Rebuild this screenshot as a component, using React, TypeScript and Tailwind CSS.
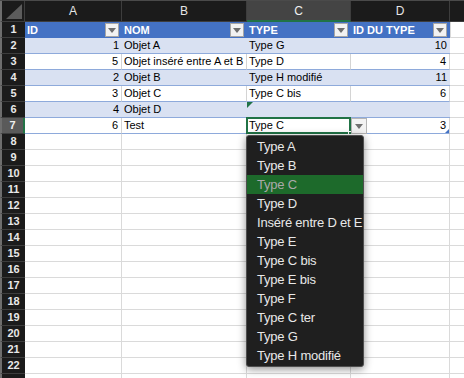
import React from "react";

const FilterBtn = () => (
  <div className="absolute right-[3px] top-[1px] w-[14px] h-[14px] bg-[#f2f2f2] border border-[#a6a6a6] flex items-center justify-center">
    <div className="w-0 h-0 border-l-[4px] border-r-[4px] border-t-[5px] border-l-transparent border-r-transparent border-t-[#6e6e6e]" />
  </div>
);

type Row = { n: number; a: string; b: string; c: string; d: string; band: boolean };

const rows: Row[] = [
  { n: 2, a: "1", b: "Objet A", c: "Type G", d: "10", band: true },
  { n: 3, a: "5", b: "Objet inséré entre A et B", c: "Type D", d: "4", band: false },
  { n: 4, a: "2", b: "Objet B", c: "Type H modifié", d: "11", band: true },
  { n: 5, a: "3", b: "Objet C", c: "Type C bis", d: "6", band: false },
  { n: 6, a: "4", b: "Objet D", c: "", d: "", band: true },
  { n: 7, a: "6", b: "Test", c: "Type C", d: "3", band: false },
];

const menuItems = [
  "Type A",
  "Type B",
  "Type C",
  "Type D",
  "Inséré entre D et E",
  "Type E",
  "Type C bis",
  "Type E bis",
  "Type F",
  "Type C ter",
  "Type G",
  "Type H modifié",
];

const RowHead = ({ n, sel }: { n: number | string; sel?: boolean }) =>
  sel ? (
    <div className="w-[25px] shrink-0 h-full bg-[#5a5a5a] border-l-2 border-l-[#6e6e6e] border-b border-b-[#3d3d3d] border-r-2 border-r-[#217346] text-[#f0f0f0] font-bold text-[11px] flex items-center justify-center">
      {n}
    </div>
  ) : (
    <div className="w-[25px] shrink-0 h-full bg-[#1b1b1b] border-l-2 border-l-[#6e6e6e] border-b border-b-[#3d3d3d] text-[#e8e8e8] font-bold text-[11px] flex items-center justify-center">
      {n}
    </div>
  );

export default function App() {
  const empty: number[] = [];
  for (let i = 8; i <= 23; i++) empty.push(i);

  return (
    <div
      className="relative w-[464px] h-[378px] overflow-hidden bg-white"
      style={{ fontFamily: '"Liberation Sans", Arial, sans-serif' }}
    >
      {/* column letters */}
      <div className="flex h-[22px] bg-[#1b1b1b] border-t border-t-[#4a4a4a]">
        <div className="w-[25px] shrink-0 h-full border-l-2 border-l-[#6e6e6e] border-r border-r-[#3d3d3d] border-b border-b-[#3d3d3d] flex items-end justify-end pr-[2px] pb-[2px]">
          <svg width="16" height="15" viewBox="0 0 16 15">
            <polygon points="16,0 16,15 0,15" fill="#5c5c5c" />
          </svg>
        </div>
        <div className="w-[97px] shrink-0 h-full border-r border-r-[#3d3d3d] border-b border-b-[#3d3d3d] text-[#e6e6e6] text-[12px] flex items-center justify-center">A</div>
        <div className="w-[125px] shrink-0 h-full border-r border-r-[#3d3d3d] border-b border-b-[#3d3d3d] text-[#e6e6e6] text-[12px] flex items-center justify-center">B</div>
        <div className="w-[104px] shrink-0 h-full bg-[#444444] border-r border-r-[#3d3d3d] border-b-2 border-b-[#217346] text-[#f0f0f0] text-[12px] flex items-center justify-center">C</div>
        <div className="w-[99px] shrink-0 h-full border-r border-r-[#3d3d3d] border-b border-b-[#3d3d3d] text-[#e6e6e6] text-[12px] flex items-center justify-center">D</div>
        <div className="flex-1 h-full border-b border-b-[#3d3d3d]" />
      </div>

      {/* table header row 1 */}
      <div className="flex h-[16px] text-[11px]">
        <RowHead n={1} />
        <div className="relative w-[97px] shrink-0 h-full bg-[#4472c4] text-white font-bold pl-[2px] flex items-center">
          ID
          <FilterBtn />
        </div>
        <div className="relative w-[125px] shrink-0 h-full bg-[#4472c4] text-white font-bold pl-[2px] flex items-center">
          NOM
          <FilterBtn />
        </div>
        <div className="relative w-[104px] shrink-0 h-full bg-[#4472c4] text-white font-bold pl-[2px] flex items-center">
          TYPE
          <FilterBtn />
        </div>
        <div className="relative w-[99px] shrink-0 h-full bg-[#4472c4] text-white font-bold pl-[2px] flex items-center">
          ID DU TYPE
          <FilterBtn />
        </div>
        <div className="flex-1 h-full border-b border-l border-[#d9d9d9]" />
      </div>

      {rows.map((r) => {
        const sel = r.n === 7;
        return (
          <div key={r.n} className="flex h-[16px] text-[11px] text-black">
            <RowHead n={r.n} sel={sel} />
            {r.band ? (
              <>
                <div className="w-[97px] shrink-0 h-full bg-[#d9e1f2] border-b border-b-[#8eaadb] pr-[3px] flex items-center justify-end">{r.a}</div>
                <div className="w-[125px] shrink-0 h-full bg-[#d9e1f2] border-b border-b-[#8eaadb] pl-[2px] flex items-center whitespace-nowrap overflow-hidden">{r.b}</div>
                <div className="relative w-[104px] shrink-0 h-full bg-[#d9e1f2] border-b border-b-[#8eaadb] pl-[2px] flex items-center whitespace-nowrap">
                  {r.c}
                  {r.n === 6 && (
                    <div className="absolute top-0 left-0 w-0 h-0 border-t-[6px] border-t-[#217346] border-r-[6px] border-r-transparent" />
                  )}
                </div>
                <div className="w-[99px] shrink-0 h-full bg-[#d9e1f2] border-b border-b-[#8eaadb] pr-[3px] flex items-center justify-end">{r.d}</div>
              </>
            ) : (
              <>
                <div className="w-[97px] shrink-0 h-full bg-white border-b border-b-[#8eaadb] border-r border-r-[#d4d4d4] pr-[3px] flex items-center justify-end">{r.a}</div>
                <div className="w-[125px] shrink-0 h-full bg-white border-b border-b-[#8eaadb] border-r border-r-[#d4d4d4] pl-[2px] flex items-center whitespace-nowrap overflow-hidden">{r.b}</div>
                <div className="relative w-[104px] shrink-0 h-full bg-white border-b border-b-[#8eaadb] border-r border-r-[#d4d4d4] pl-[2px] flex items-center whitespace-nowrap">
                  {r.c}
                  {sel && (
                    <>
                      <div className="absolute -top-[1px] -left-[1px] -right-[1px] -bottom-[1px] border-2 border-[#217346]" />
                      <div className="absolute -bottom-[2px] -right-[2px] w-[4px] h-[4px] bg-[#217346] border border-white" />
                      <div className="absolute top-0 left-[calc(100%+1px)] w-[16px] h-[16px] bg-[#f3f3f3] border border-[#b5b5b5] flex items-center justify-center z-10">
                        <div className="w-0 h-0 border-l-[4px] border-r-[4px] border-t-[5px] border-l-transparent border-r-transparent border-t-[#707070]" />
                      </div>
                    </>
                  )}
                </div>
                <div className="relative w-[99px] shrink-0 h-full bg-white border-b border-b-[#8eaadb] border-r border-r-[#d4d4d4] pr-[3px] flex items-center justify-end">
                  {r.d}
                  {sel && (
                    <div className="absolute bottom-0 right-0 w-0 h-0 border-b-[4px] border-b-[#4472c4] border-l-[4px] border-l-transparent" />
                  )}
                </div>
              </>
            )}
            <div className="flex-1 h-full bg-white border-b border-[#d9d9d9]" />
          </div>
        );
      })}

      {empty.map((n) => (
        <div key={n} className="flex h-[16px] text-[11px]">
          <RowHead n={n === 23 ? "" : n} />
          <div className="w-[97px] shrink-0 h-full bg-white border-b border-r border-[#dadada]" />
          <div className="w-[125px] shrink-0 h-full bg-white border-b border-r border-[#dadada]" />
          <div className="w-[104px] shrink-0 h-full bg-white border-b border-r border-[#dadada]" />
          <div className="w-[99px] shrink-0 h-full bg-white border-b border-r border-[#dadada]" />
          <div className="flex-1 h-full bg-white border-b border-[#dadada]" />
        </div>
      ))}

      {/* dropdown menu */}
      <div className="absolute left-[246px] top-[135px] w-[118px] bg-[#1f1f1f] border border-[#4e4e4e] rounded-[3px] shadow-[0_2px_8px_rgba(0,0,0,0.45)] py-[1px] z-20">
        {menuItems.map((m) =>
          m === "Type C" ? (
            <div key={m} className="h-[19px] pl-[10px] flex items-center text-[13px] tracking-[-0.2px] bg-[#1d6a2b] text-[#a9a9a9] whitespace-nowrap">
              {m}
            </div>
          ) : (
            <div key={m} className="h-[19px] pl-[10px] flex items-center text-[13px] tracking-[-0.2px] text-[#e8e8e8] whitespace-nowrap">
              {m}
            </div>
          )
        )}
      </div>
    </div>
  );
}
